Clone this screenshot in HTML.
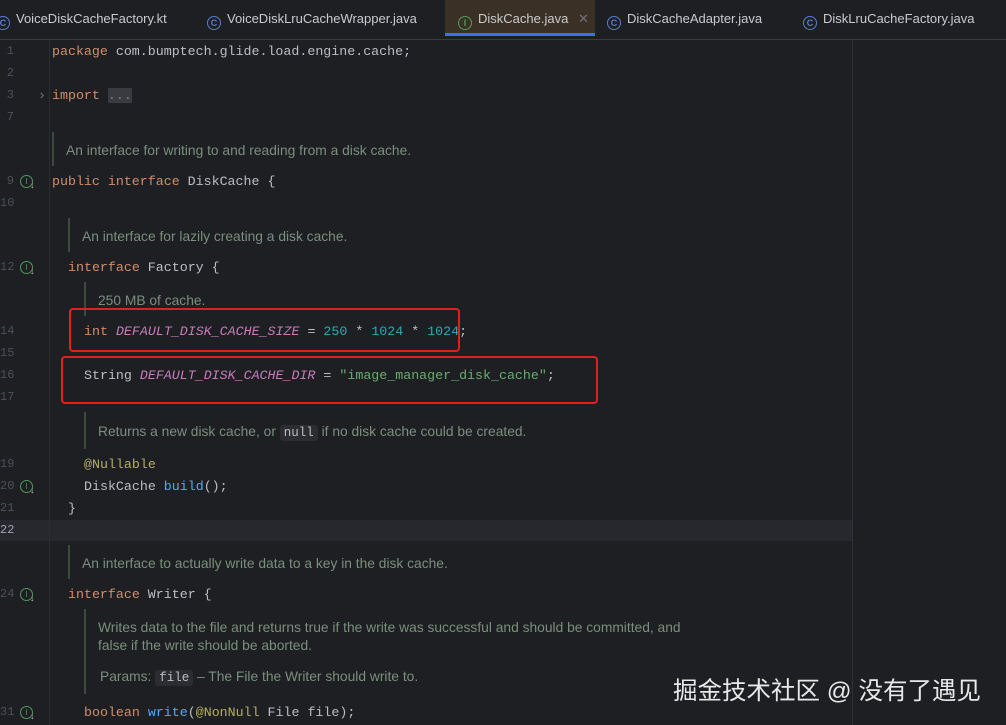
<!DOCTYPE html>
<html><head><meta charset="utf-8"><style>
body{margin:0;width:1006px;height:725px;background:#1e1f22;overflow:hidden;position:relative;font-family:"Liberation Sans",sans-serif}
.tabs{position:absolute;left:0;top:0;width:1006px;height:39px;background:#1e1f22;border-bottom:1px solid #393b40}
.tab{position:absolute;top:0;height:39px;line-height:38px;font-size:13px;color:#c9cbd0;white-space:nowrap}
.ic{display:inline-block;width:12px;height:12px;border:1.5px solid #5a7bd6;border-radius:50%;vertical-align:-3px;margin-right:6px;font-size:9px;line-height:12px;text-align:center;color:#5a7bd6;font-weight:bold}
.ic.g{border-color:#4f9a5c;color:#4f9a5c}
.active{background:#3a3025;border-bottom:3px solid #3574f0;height:36px}
.c{position:absolute;font-family:"Liberation Mono",monospace;font-size:13.3px;color:#bcbec4;white-space:pre;line-height:20px}
.n{position:absolute;left:0;width:14px;text-align:right;font-family:"Liberation Mono",monospace;font-size:12px;color:#4b5059;line-height:20px}
.k{color:#cf8e6d}.i{color:#c77dbb;font-style:italic}.num{color:#2aacb8}.s{color:#6aab73}.a{color:#b3ae60}.m{color:#56a8f5}
.d{position:absolute;font-size:13.8px;color:#7a8f7d;white-space:nowrap;line-height:18px}
.bar{position:absolute;width:2px;background:#3a4a3e}
.code{background:#2b2d30;border-radius:3px;padding:1px 4px;font-family:"Liberation Mono",monospace;color:#bcbec4;font-size:12.5px}
.gi{position:absolute;left:20px;width:11px;height:11px;border:1.3px solid #4f9a5c;border-radius:50%;font-size:8px;line-height:11px;text-align:center;color:#4f9a5c}
.gi:after{content:"↓";position:absolute;left:9px;top:4px;color:#bcbec4;font-size:9px}
.box{position:absolute;border:2.5px solid #e0201c;border-radius:4px}
</style></head><body>
<div class="tabs">
<div class="tab" style="left:-4px"><span class="ic">C</span>VoiceDiskCacheFactory.kt</div>
<div class="tab" style="left:207px"><span class="ic">C</span>VoiceDiskLruCacheWrapper.java</div>
<div class="tab active" style="left:445px;width:150px;padding-left:13px;box-sizing:border-box"><span class="ic g">I</span>DiskCache.java <span style="color:#6f737a;margin-left:6px">✕</span></div>
<div class="tab" style="left:607px"><span class="ic">C</span>DiskCacheAdapter.java</div>
<div class="tab" style="left:803px"><span class="ic">C</span>DiskLruCacheFactory.java</div>
</div>
<div style="position:absolute;left:852px;top:40px;width:1px;height:685px;background:#2f3136"></div>
<div style="position:absolute;left:0;top:520px;width:852px;height:21px;background:#26282e"></div>
<div style="position:absolute;left:49px;top:40px;width:1px;height:685px;background:#2b2d30"></div>

<div class="n" style="top:41px">1</div><div class="c" style="left:52px;top:42px"><span class="k">package</span> com.bumptech.glide.load.engine.cache;</div>
<div class="n" style="top:63px">2</div>
<div class="n" style="top:85px">3</div><div class="c" style="left:38px;top:86px;color:#6f737a">›</div><div class="c" style="left:52px;top:86px"><span class="k">import</span> <span style="background:#393b40;color:#7a7e85">...</span></div>
<div class="n" style="top:107px">7</div>
<div class="bar" style="left:52px;top:132px;height:34px"></div><div class="d" style="left:66px;top:142px">An interface for writing to and reading from a disk cache.</div>
<div class="n" style="top:171px">9</div><div class="gi" style="top:175px">I</div><div class="c" style="left:52px;top:172px"><span class="k">public interface</span> DiskCache {</div>
<div class="n" style="top:193px">10</div>
<div class="bar" style="left:68px;top:218px;height:34px"></div><div class="d" style="left:82px;top:228px">An interface for lazily creating a disk cache.</div>
<div class="n" style="top:257px">12</div><div class="gi" style="top:261px">I</div><div class="c" style="left:68px;top:258px"><span class="k">interface</span> Factory {</div>
<div class="bar" style="left:84px;top:282px;height:34px"></div><div class="d" style="left:98px;top:292px">250 MB of cache.</div>
<div class="n" style="top:321px">14</div><div class="c" style="left:84px;top:322px"><span class="k">int</span> <span class="i">DEFAULT_DISK_CACHE_SIZE</span> = <span class="num">250</span> * <span class="num">1024</span> * <span class="num">1024</span>;</div>
<div class="n" style="top:343px">15</div>
<div class="n" style="top:365px">16</div><div class="c" style="left:84px;top:366px">String <span class="i">DEFAULT_DISK_CACHE_DIR</span> = <span class="s">"image_manager_disk_cache"</span>;</div>
<div class="n" style="top:387px">17</div>
<div class="bar" style="left:84px;top:412px;height:37px"></div><div class="d" style="left:98px;top:423px">Returns a new disk cache, or <span class="code">null</span> if no disk cache could be created.</div>
<div class="n" style="top:454px">19</div><div class="c" style="left:84px;top:455px"><span class="a">@Nullable</span></div>
<div class="n" style="top:476px">20</div><div class="gi" style="top:480px">I</div><div class="c" style="left:84px;top:477px">DiskCache <span class="m">build</span>();</div>
<div class="n" style="top:498px">21</div><div class="c" style="left:68px;top:499px">}</div>
<div class="n" style="top:520px;color:#a1a3ab">22</div>
<div class="bar" style="left:68px;top:545px;height:34px"></div><div class="d" style="left:82px;top:555px">An interface to actually write data to a key in the disk cache.</div>
<div class="n" style="top:584px">24</div><div class="gi" style="top:588px">I</div><div class="c" style="left:68px;top:585px"><span class="k">interface</span> Writer {</div>
<div class="bar" style="left:84px;top:609px;height:85px"></div>
<div class="d" style="left:98px;top:619px">Writes data to the file and returns true if the write was successful and should be committed, and</div>
<div class="d" style="left:98px;top:637px">false if the write should be aborted.</div>
<div class="d" style="left:100px;top:668px">Params: <span class="code">file</span> – The File the Writer should write to.</div>
<div class="n" style="top:702px">31</div><div class="gi" style="top:706px">I</div><div class="c" style="left:84px;top:703px"><span class="k">boolean</span> <span class="m">write</span>(<span class="a">@NonNull</span> File file);</div>

<div class="box" style="left:69px;top:308px;width:387px;height:40px"></div>
<div class="box" style="left:61px;top:356px;width:533px;height:44px"></div>
<div style="position:absolute;left:673px;top:672px;font-family:'Liberation Sans','Noto Sans CJK SC',sans-serif;font-size:24.5px;color:#e8e8e8;white-space:nowrap">掘金技术社区 @ 没有了遇见</div>
</body></html>
